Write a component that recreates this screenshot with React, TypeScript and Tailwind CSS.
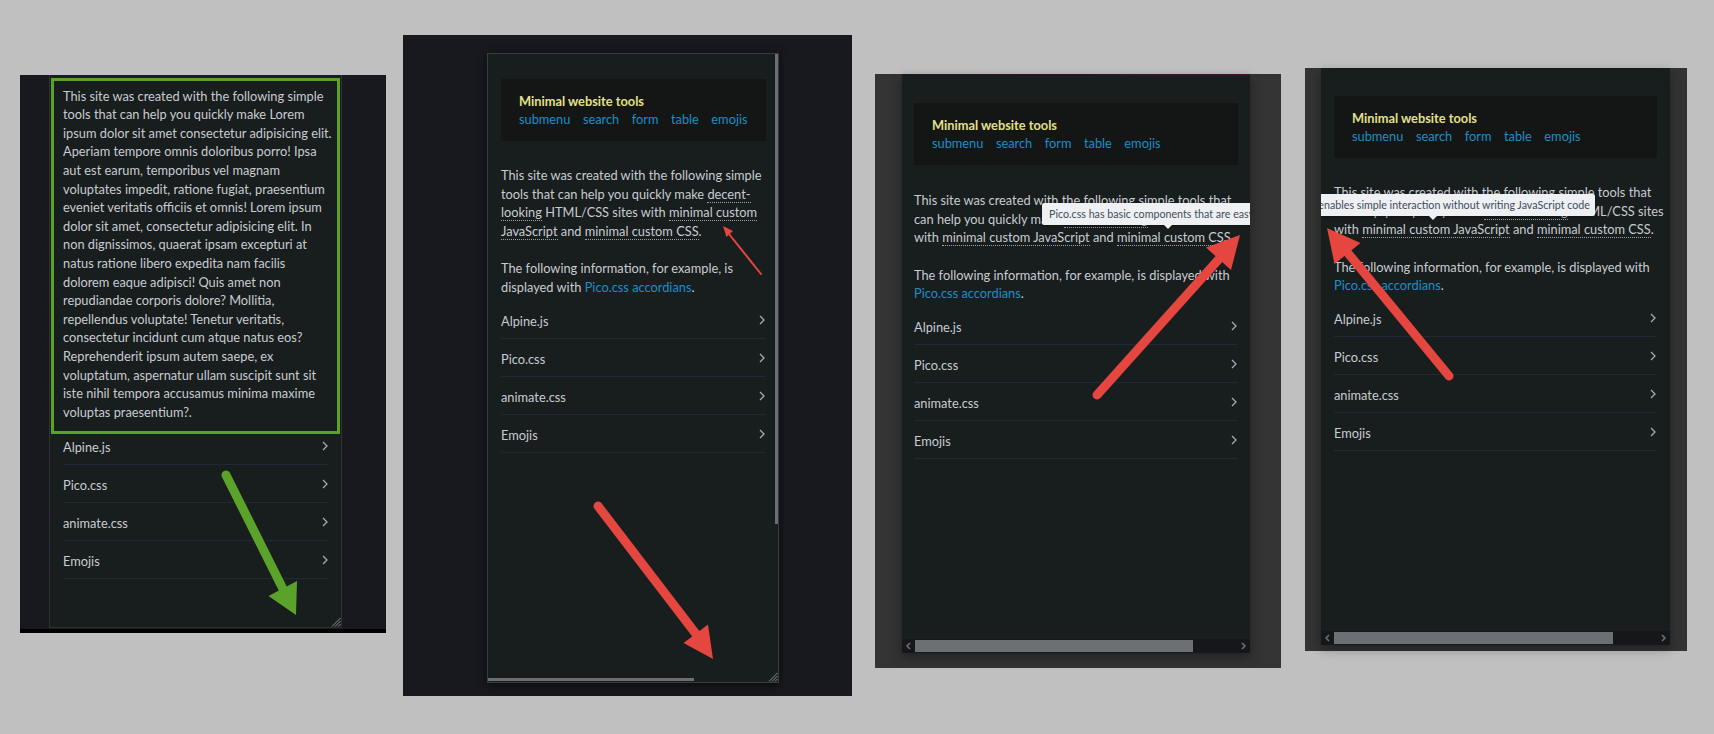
import React from "react";

const TEXT = "text-[#c8ccd1]";

function U({ children }: { children: React.ReactNode }) {
  return <span className="border-b border-dotted border-[#9aa1a8]">{children}</span>;
}

function Chevron() {
  return (
    <svg width="6" height="10" viewBox="0 0 6 10" className="mb-[3px]">
      <polyline points="1,1 5,5 1,9" fill="none" stroke="#a3acb5" strokeWidth="1.3" />
    </svg>
  );
}

function Grip() {
  return (
    <svg width="11" height="11" viewBox="0 0 11 11" className="absolute bottom-0 right-0">
      <line x1="10.5" y1="2" x2="2" y2="10.5" stroke="#8d8d8d" strokeWidth="1" />
      <line x1="10.5" y1="5" x2="5" y2="10.5" stroke="#8d8d8d" strokeWidth="1" />
      <line x1="10.5" y1="8" x2="8" y2="10.5" stroke="#8d8d8d" strokeWidth="1" />
    </svg>
  );
}

function Header() {
  return (
    <div className="bg-[#141515] pl-[18px] pt-[12.7px] pb-[11.7px]">
      <div className="font-bold text-[#e3e08a] whitespace-nowrap">Minimal website tools</div>
      <div className="flex gap-[12.5px] text-[#1d8fc7] whitespace-nowrap">
        <span>submenu</span>
        <span>search</span>
        <span>form</span>
        <span>table</span>
        <span>emojis</span>
      </div>
    </div>
  );
}

function Accordions({ firstPt }: { firstPt?: string }) {
  const items = ["Alpine.js", "Pico.css", "animate.css", "Emojis"];
  return (
    <div className="flex flex-col">
      {items.map((t, i) => (
        <div
          key={t}
          className={
            "flex items-center justify-between pr-[1px] pb-[7.4px] border-b border-[#1f2b34] " +
            (i === 0 && firstPt ? firstPt : "pt-[11px]")
          }
        >
          <span className="whitespace-nowrap">{t}</span>
          <Chevron />
        </div>
      ))}
    </div>
  );
}

function Tooltip({ text, arrowLeft, className }: { text: string; arrowLeft: string; className: string }) {
  return (
    <div
      className={
        "absolute h-[22px] bg-[#eef0f3] rounded-[2px] flex items-center text-[10.7px] text-[#3e4d5b] whitespace-nowrap shadow-[0_1px_3px_rgba(0,0,0,0.4)] " +
        className
      }
    >
      {text}
      <div
        className={
          "absolute top-full w-0 h-0 border-x-[4px] border-x-transparent border-t-[4px] border-t-[#eef0f3] " + arrowLeft
        }
      />
    </div>
  );
}

function ScrollRow({ thumb }: { thumb: string }) {
  return (
    <div className="h-[14px] bg-[#15171b] flex items-center">
      <div className="w-[13px] flex justify-center">
        <svg width="5" height="8" viewBox="0 0 5 8">
          <polyline points="4,1 1,4 4,7" fill="none" stroke="#6f737a" strokeWidth="1.5" />
        </svg>
      </div>
      <div className={"h-[12px] bg-[#6c6f74] " + thumb} />
      <div className="flex-1" />
      <div className="w-[13px] flex justify-center">
        <svg width="5" height="8" viewBox="0 0 5 8">
          <polyline points="1,1 4,4 1,7" fill="none" stroke="#6f737a" strokeWidth="1.5" />
        </svg>
      </div>
    </div>
  );
}

function WideText({ mt }: { mt: string }) {
  return (
    <>
      <div className={mt}>
        <div className="whitespace-nowrap">This site was created with the following simple tools that</div>
        <div className="whitespace-nowrap">
          can help you quickly make <U>decent-looking</U> HTML/CSS sites
        </div>
        <div className="whitespace-nowrap">
          with <U>minimal custom JavaScript</U> and <U>minimal custom CSS</U>.
        </div>
      </div>
      <div className="mt-[18.6px]">
        <div className="whitespace-nowrap">The following information, for example, is displayed with</div>
        <div className="whitespace-nowrap">
          <span className="text-[#1d8fc7]">Pico.css accordians</span>.
        </div>
      </div>
    </>
  );
}

function Arrows() {
  return (
    <svg width="1714" height="734" viewBox="0 0 1714 734" className="absolute left-0 top-0 pointer-events-none">
      {/* green */}
      <line x1="226" y1="475" x2="283" y2="589" stroke="#5ba22a" strokeWidth="9" strokeLinecap="round" />
      <polygon points="296,615 268.5,596 297,581" fill="#5ba22a" />
      {/* red small */}
      <line x1="761" y1="274" x2="729" y2="234" stroke="#e5463f" strokeWidth="2" strokeLinecap="round" />
      <polygon points="723,226 733,231 726.5,237" fill="#e5463f" />
      {/* red big p2 */}
      <line x1="598" y1="506" x2="696" y2="634" stroke="#e5463f" strokeWidth="9" strokeLinecap="round" />
      <polygon points="713,659 683.5,643 708,624.5" fill="#e5463f" />
      {/* red p3 */}
      <line x1="1097" y1="395" x2="1219" y2="259" stroke="#e5463f" strokeWidth="9" strokeLinecap="round" />
      <polygon points="1240,235 1231,270 1206,247.5" fill="#e5463f" />
      {/* red p4 */}
      <line x1="1449" y1="376" x2="1347" y2="252" stroke="#e5463f" strokeWidth="9" strokeLinecap="round" />
      <polygon points="1327,228 1360.5,243 1334.5,264" fill="#e5463f" />
    </svg>
  );
}

export default function App() {
  return (
    <div
      className={
        "relative w-[1714px] h-[734px] overflow-hidden bg-[#c0c0c0] flex items-start font-['Lato','Noto_Sans',sans-serif] text-[12.8px] leading-[18.6px] " +
        TEXT
      }
    >
      {/* Panel 1 */}
      <div className="ml-[20px] mt-[75px] w-[366px] h-[558px] bg-[#17191e] flex flex-col">
        <div className="ml-[29px] w-[293px] h-[553px] border-x border-b border-[#2f3133] bg-[#181d1e] relative overflow-hidden flex flex-col">
          <div className="ml-[1px] mt-[3px] w-[289px] border-[3px] border-[#5ba22a] pl-[9px] pt-[5.7px] pb-[9.7px]">
            {[
              "This site was created with the following simple",
              "tools that can help you quickly make Lorem",
              "ipsum dolor sit amet consectetur adipisicing elit.",
              "Aperiam tempore omnis doloribus porro! Ipsa",
              "aut est earum, temporibus vel magnam",
              "voluptates impedit, ratione fugiat, praesentium",
              "eveniet veritatis officiis et omnis! Lorem ipsum",
              "dolor sit amet, consectetur adipisicing elit. In",
              "non dignissimos, quaerat ipsam excepturi at",
              "natus ratione libero expedita nam facilis",
              "dolorem eaque adipisci! Quis amet non",
              "repudiandae corporis dolore? Mollitia,",
              "repellendus voluptate! Tenetur veritatis,",
              "consectetur incidunt cum atque natus eos?",
              "Reprehenderit ipsum autem saepe, ex",
              "voluptatum, aspernatur ullam suscipit sunt sit",
              "iste nihil tempora accusamus minima maxime",
              "voluptas praesentium?.",
            ].map((l) => (
              <div key={l} className="whitespace-nowrap">
                {l}
              </div>
            ))}
          </div>
          <div className="pl-[13px] pr-[12px]">
            <Accordions firstPt="pt-[3.7px]" />
          </div>
          <Grip />
        </div>
        <div className="h-[1px]" />
        <div className="h-[4px] bg-black" />
      </div>

      {/* Panel 2 */}
      <div className="ml-[17px] mt-[35px] w-[449px] h-[661px] bg-[#17191e] pl-[84px] pt-[18px]">
        <div className="w-[292px] h-[630px] border border-[#3a3c3e] bg-[#181d1e] relative overflow-hidden shadow-[0_2px_8px_rgba(0,0,0,0.6)]">
          <div className="pl-[13px] pr-[12px] pt-[25px]">
            <Header />
            <div className="mt-[25.7px]">
              <div className="whitespace-nowrap">This site was created with the following simple</div>
              <div className="whitespace-nowrap">
                tools that can help you quickly make <U>decent-</U>
              </div>
              <div className="whitespace-nowrap">
                <U>looking</U> HTML/CSS sites with <U>minimal custom</U>
              </div>
              <div className="whitespace-nowrap">
                <U>JavaScript</U> and <U>minimal custom CSS</U>.
              </div>
            </div>
            <div className="mt-[18.6px]">
              <div className="whitespace-nowrap">The following information, for example, is</div>
              <div className="whitespace-nowrap">
                displayed with <span className="text-[#1d8fc7]">Pico.css accordians</span>.
              </div>
            </div>
            <div className="mt-[4.7px]">
              <Accordions />
            </div>
          </div>
          <div className="absolute right-0 top-0 w-[3px] h-[470px] bg-[#6b6e72]" />
          <div className="absolute left-0 bottom-[1px] w-[206px] h-[3px] bg-[#6b6e72]" />
          <Grip />
        </div>
      </div>

      {/* Panel 3 */}
      <div className="ml-[23px] mt-[74px] w-[406px] h-[594px] bg-[#333333] pl-[27px]">
        <div className="w-[348px] h-[579px] bg-[#181d1e] flex flex-col shadow-[0_4px_10px_rgba(0,0,0,0.35)]">
          <div className="h-[2px] bg-gradient-to-r from-[#1c1b24] via-[#2a1628] to-[#3c1430]" />
          <div className="flex-1 relative overflow-hidden pl-[12px] pr-[12px] pt-[27px]">
            <Header />
            <WideText mt="mt-[26.7px]" />
            <div className="mt-[4.4px]">
              <Accordions />
            </div>
            <Tooltip
              text="Pico.css has basic components that are easy to use"
              arrowLeft="left-[122px]"
              className="left-[140px] top-[127px] pl-[7px] pr-[7px]"
            />
          </div>
          <ScrollRow thumb="w-[278px]" />
        </div>
      </div>

      {/* Panel 4 */}
      <div className="ml-[24px] mt-[68px] w-[382px] h-[583px] bg-[#333333] pl-[16px]">
        <div className="w-[349px] h-[577px] bg-[#181d1e] flex flex-col shadow-[0_4px_10px_rgba(0,0,0,0.35)]">
          <div className="flex-1 relative overflow-hidden pl-[13px] pr-[13px] pt-[28px]">
            <Header />
            <WideText mt="mt-[25.7px]" />
            <div className="mt-[4.4px]">
              <Accordions />
            </div>
            <Tooltip
              text="Alpine.js enables simple interaction without writing JavaScript code"
              arrowLeft="right-[158px]"
              className="right-[75px] top-[126px] pl-[6px] pr-[5px]"
            />
          </div>
          <ScrollRow thumb="w-[279px]" />
        </div>
      </div>

      <Arrows />
    </div>
  );
}
